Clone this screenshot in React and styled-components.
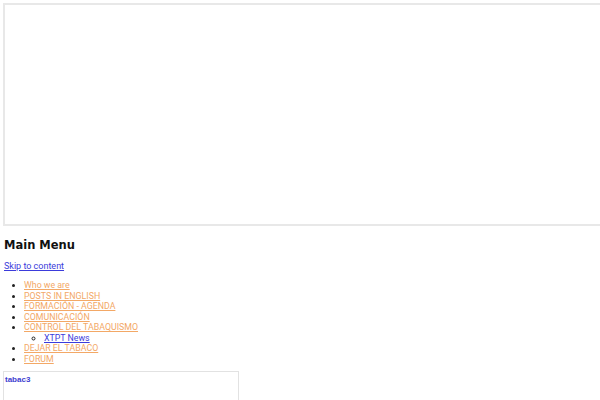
import React from "react";
import styled, { createGlobalStyle } from "styled-components";

const GlobalStyle = createGlobalStyle`
  html, body {
    margin: 0;
    padding: 0;
    background: #ffffff;
    overflow: hidden;
  }
  body {
    font-family: "DejaVu Sans", Verdana, sans-serif;
  }
`;

const Page = styled.div`
  width: 600px;
  height: 400px;
  overflow: hidden;
  padding: 3px 0 0 4px;
  box-sizing: border-box;
`;

const Frame = styled.div`
  margin-left: -1px;
  width: 640px;
  height: 219px;
  border: 2px solid #e8e8e8;
`;

const Heading = styled.h2`
  margin: 12px 0 0;
  font-family: "DejaVu Sans", Verdana, sans-serif;
  font-size: 11.5px;
  font-weight: bold;
  line-height: 14px;
  color: #111111;
`;

const SkipLink = styled.a`
  display: block;
  margin-top: 8px;
  font-family: Roboto, "Liberation Sans", Arial, sans-serif;
  font-size: 9px;
  line-height: 12px;
  color: #3b3bdb;
  text-decoration: underline;
`;

const Menu = styled.ul`
  margin: 8px 0 0;
  padding-left: 20px;
  list-style: disc;
  font-family: Roboto, "Liberation Sans", Arial, sans-serif;
  font-size: 8.8px;
  line-height: 10.5px;
`;

const SubMenu = styled.ul`
  margin: 0;
  padding-left: 20px;
  list-style: circle;
`;

const Item = styled.li`
  color: #222;
`;

const MenuLink = styled.a`
  color: ${(p) => (p.$sub ? "#3b3bdb" : "#f3a866")};
  text-decoration: underline;
`;

const ImageBox = styled.div`
  margin: 7px 0 0 -1px;
  width: 234px;
  height: 40px;
  border: 1px solid #e2e2e2;
  border-bottom: none;
`;

const AltLink = styled.a`
  display: block;
  margin: 3px 0 0 1px;
  font-family: "Liberation Sans", Arial, sans-serif;
  font-size: 8px;
  font-weight: bold;
  color: #4040d0;
  text-decoration: none;
`;

const items = [
  "Who we are",
  "POSTS IN ENGLISH",
  "FORMACIÓN - AGENDA",
  "COMUNICACIÓN",
  "CONTROL DEL TABAQUISMO",
  "DEJAR EL TABACO",
  "FORUM",
];

const App = () => {
  return (
    <Page>
      <GlobalStyle />
      <Frame />
      <Heading>Main Menu</Heading>
      <SkipLink href="#">Skip to content</SkipLink>
      <Menu>
        {items.map((label) => (
          <Item key={label}>
            <MenuLink href="#">{label}</MenuLink>
            {label === "CONTROL DEL TABAQUISMO" && (
              <SubMenu>
                <Item>
                  <MenuLink href="#" $sub>
                    XTPT News
                  </MenuLink>
                </Item>
              </SubMenu>
            )}
          </Item>
        ))}
      </Menu>
      <ImageBox>
        <AltLink href="#">tabac3</AltLink>
      </ImageBox>
    </Page>
  );
};

export default App;
